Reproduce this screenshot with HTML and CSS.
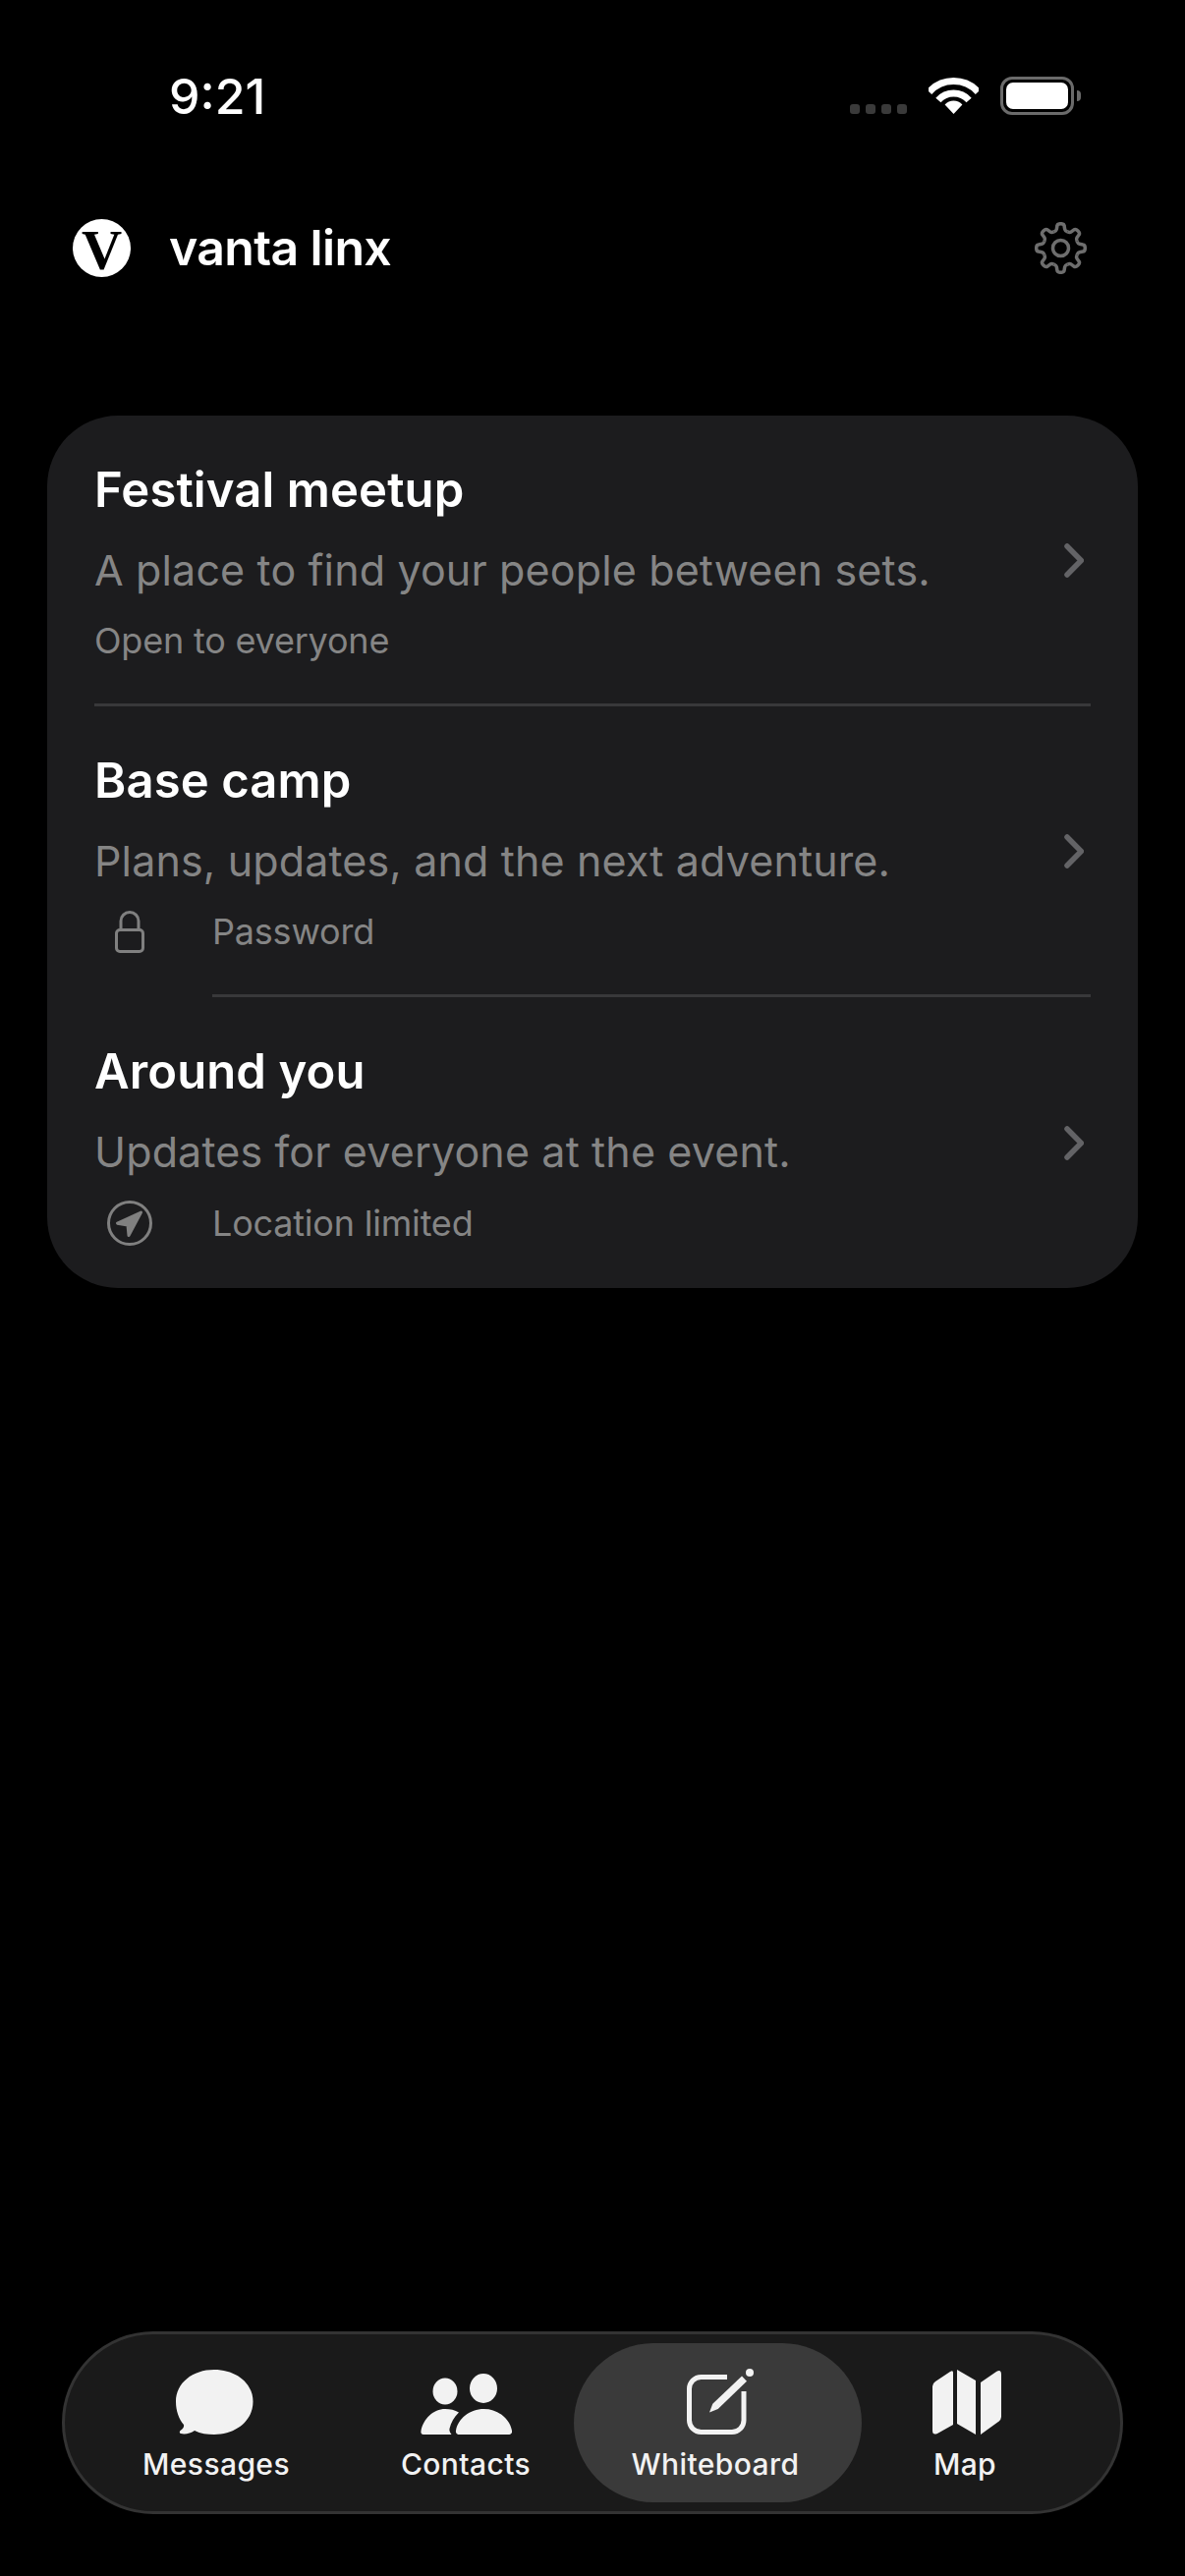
FILE: index.html
```html
<!DOCTYPE html>
<html lang="en">
<head>
    <meta charset="UTF-8">
    <meta name="viewport" content="width=device-width, initial-scale=1.0">
    <title>vanta linx</title>
    <link rel="stylesheet" href="styles.css">
</head>
<body>
    <div class="status-bar">
        <span class="time">9:21</span>
        <div class="status-icons">
            <div class="signal"><i></i><i></i><i></i><i></i></div>
            <svg class="wifi" width="51" height="37" viewBox="0 0 51 37">
                <path class="wifi-arc" d="M.6 14.6A33.5 33.5 0 0 1 50.4 14.6"/>
                <path class="wifi-arc" d="M9.9 23A21 21 0 0 1 41.1 23"/>
                <path class="wifi-dot" d="M25.5 37L16.6 27.5A12 12 0 0 1 34.4 27.5Z"/>
            </svg>
            <div class="battery"><div class="battery-level"></div></div>
        </div>
    </div>

    <header class="app-header">
        <div class="brand">
            <span class="logo">V</span>
            <h1>vanta linx</h1>
        </div>
        <svg class="gear" width="53" height="53" viewBox="-26.5 -26.5 53 53">
            <defs>
                <path id="tooth" d="M-6.9-16.6C-5.5-17.2-4.4-17.8-4.2-19L-3.6-22.6C-3.4-24.4-1.5-24.8 0-24.8S3.4-24.4 3.6-22.6L4.2-19C4.4-17.8 5.5-17.2 6.9-16.6"/>
            </defs>
            <use href="#tooth"/>
            <use href="#tooth" transform="rotate(45)"/>
            <use href="#tooth" transform="rotate(90)"/>
            <use href="#tooth" transform="rotate(135)"/>
            <use href="#tooth" transform="rotate(180)"/>
            <use href="#tooth" transform="rotate(225)"/>
            <use href="#tooth" transform="rotate(270)"/>
            <use href="#tooth" transform="rotate(315)"/>
            <circle r="8"/>
        </svg>
    </header>

    <main class="card">
        <div class="row">
            <div class="row-text">
                <h2>Festival meetup</h2>
                <p class="desc">A place to find your people between sets.</p>
                <p class="meta">Open to everyone</p>
            </div>
            <svg class="chevron" width="20" height="35" viewBox="0 0 20 35"><path d="M3 3L17.3 17.5L3 32"/></svg>
        </div>
        <div class="divider"></div>
        <div class="row">
            <div class="row-text">
                <h2>Base camp</h2>
                <p class="desc">Plans, updates, and the next adventure.</p>
                <div class="meta meta-icon">
                    <span class="meta-glyph">
                        <svg width="30" height="43" viewBox="0 0 30 43">
                            <rect x="1.5" y="19.5" width="27" height="22" rx="3.5"/>
                            <path d="M6 19V10.5A9 9 0 0 1 24 10.5V19"/>
                        </svg>
                    </span>
                    <span>Password</span>
                </div>
            </div>
            <svg class="chevron" width="20" height="35" viewBox="0 0 20 35"><path d="M3 3L17.3 17.5L3 32"/></svg>
        </div>
        <div class="divider divider-inset"></div>
        <div class="row">
            <div class="row-text">
                <h2>Around you</h2>
                <p class="desc">Updates for everyone at the event.</p>
                <div class="meta meta-icon">
                    <span class="meta-glyph">
                        <svg width="46" height="46" viewBox="0 0 46 46">
                            <circle cx="23" cy="23" r="21.5"/>
                            <path class="nav-arrow" d="M34.5 12L10.5 23.2L21 25L22 35.5Z"/>
                        </svg>
                    </span>
                    <span>Location limited</span>
                </div>
            </div>
            <svg class="chevron" width="20" height="35" viewBox="0 0 20 35"><path d="M3 3L17.3 17.5L3 32"/></svg>
        </div>
    </main>

    <nav class="tab-bar">
        <a class="tab">
            <span class="tab-icon icon-messages">
                <svg width="79" height="66" viewBox="0 0 79 66">
                    <path d="M39 0C61 0 78.5 13.5 78.5 32.5C78.5 52 61 66 39 66C32 66 25 65 19 62C15 65 9 66 5 65C3.5 64.5 3.5 63 4.5 62C7.5 60 8.5 58 8 56C3 50 0 42 0 32.5C0 13.5 17 0 39 0Z"/>
                </svg>
            </span>
            <span class="tab-label">Messages</span>
        </a>
        <a class="tab">
            <span class="tab-icon">
                <svg width="93" height="62" viewBox="0 0 93 62">
                    <ellipse cx="64" cy="15" rx="14" ry="15"/>
                    <path d="M36 58C38 46 50 36 64.5 36C79 36 91 46 93 58C93.5 60.5 92 62 89 62H40C37 62 35.5 60.5 36 58Z"/>
                    <ellipse cx="25" cy="18" rx="12.5" ry="13.5"/>
                    <path d="M3 62C1 62 0 60.5 .5 58C3 46 13 36 25 36C30 36 35 37 39 39.5C34 44 31 50 29.5 56C29 58 30 60 31.5 62Z"/>
                </svg>
            </span>
            <span class="tab-label">Contacts</span>
        </a>
        <a class="tab active">
            <span class="tab-icon icon-note">
                <svg width="68" height="67" viewBox="0 0 68 67">
                    <path class="note" d="M41 8.5H14.5A12 12 0 0 0 2.5 20.5V52.5A12 12 0 0 0 14.5 64.5H46A12 12 0 0 0 58 52.5V23"/>
                    <path d="M23 44.5L26.3 35.7L56 7.5L61 12.7L31.7 41Z"/>
                    <circle cx="64" cy="4" r="4"/>
                </svg>
            </span>
            <span class="tab-label">Whiteboard</span>
        </a>
        <a class="tab">
            <span class="tab-icon icon-map">
                <svg width="70" height="66" viewBox="0 0 70 66">
                    <path d="M0 17Q0 14 3 12L18 2Q21 0 21 3V56L5 65Q0 67 0 62Z"/>
                    <path d="M25 0L44 11V66L25 55Z"/>
                    <path d="M49 13L65 2Q70-1 70 5V48Q70 51 67 53L49 66Z"/>
                </svg>
            </span>
            <span class="tab-label">Map</span>
        </a>
    </nav>
</body>
</html>
```

FILE: styles.css
```css
*{
    margin: 0;
    padding: 0;
    box-sizing: border-box;
}

body{
    height: 100vh;
    display: flex;
    flex-direction: column;
    background-color: #000;
    color: #fff;
    font-family: "Inter", "Liberation Sans", sans-serif;
    overflow: hidden;
}

svg{
    display: block;
}

/* status bar */
.status-bar{
    display: flex;
    justify-content: space-between;
    padding: 68px 106px 0 172px;
    height: 128px;
}
.time{
    font-size: 50px;
    line-height: 60px;
    font-weight: 500;
}
.status-icons{
    display: flex;
    align-items: flex-end;
    height: 49px;
}
.signal{
    display: flex;
    gap: 6px;
    margin-bottom: 1px;
    margin-right: 22px;
}
.signal i{
    width: 10px;
    height: 10px;
    border-radius: 3px;
    background-color: #3a3a3a;
}
.wifi{
    margin-right: 22px;
    margin-bottom: 1px;
}
.wifi-arc{
    fill: none;
    stroke: #fff;
    stroke-width: 7;
}
.wifi-dot{
    fill: #fff;
}
.battery{
    position: relative;
    width: 75px;
    height: 39px;
    padding: 3px;
    border: 3px solid #6b6b6b;
    border-radius: 12px;
    margin-right: 7px;
}
.battery::after{
    content: "";
    position: absolute;
    left: 75px;
    top: 11px;
    width: 4px;
    height: 11px;
    border-radius: 0 4px 4px 0;
    background-color: #6b6b6b;
}
.battery-level{
    height: 100%;
    border-radius: 7px;
    background-color: #fff;
}

/* header */
.app-header{
    display: flex;
    justify-content: space-between;
    align-items: center;
    margin-top: 95px;
    padding: 0 100px 0 74px;
}
.brand{
    display: flex;
    align-items: center;
    gap: 39px;
}
.logo{
    width: 59px;
    height: 59px;
    border-radius: 50%;
    background-color: #fff;
    color: #000;
    font-family: "Liberation Serif", serif;
    font-weight: 700;
    font-size: 57px;
    line-height: 63px;
    text-align: center;
}
h1{
    font-size: 50px;
    line-height: 59px;
    font-weight: 600;
    letter-spacing: -0.65px;
}
.gear{
    fill: none;
    stroke: #6e6e6e;
    stroke-width: 3.5;
}

/* card */
.card{
    margin: 141px 48px 0;
    padding-bottom: 1px;
    border-radius: 72px;
    background-color: #1c1c1e;
}
.row{
    display: flex;
    align-items: center;
    padding: 47px 55px 42px 48px;
}
.row-text{
    flex: 1;
    display: flex;
    flex-direction: column;
    gap: 22px;
}
h2{
    font-size: 49px;
    line-height: 58px;
    font-weight: 600;
    letter-spacing: 0.1px;
}
.desc{
    margin: 1px 0 -1px;
    font-size: 43px;
    line-height: 58px;
    letter-spacing: 0.15px;
    color: #858585;
}
.meta{
    font-size: 36px;
    line-height: 44px;
    letter-spacing: -0.2px;
    color: #858585;
}
.meta-icon{
    display: flex;
    align-items: center;
    gap: 48px;
}
.meta-glyph{
    width: 72px;
    display: flex;
    justify-content: center;
}
.meta-glyph svg{
    fill: none;
    stroke: #808080;
    stroke-width: 3;
}
.meta-glyph .nav-arrow{
    fill: #808080;
    stroke-linejoin: round;
}
.chevron{
    margin-top: -3px;
    fill: none;
    stroke: #636366;
    stroke-width: 5.5;
    stroke-linecap: round;
    stroke-linejoin: round;
}
.divider{
    height: 3px;
    margin: 0 48px;
    background-color: #38383a;
}
.divider-inset{
    margin-left: 168px;
}

/* tab bar */
.tab-bar{
    display: grid;
    grid-template-columns: repeat(4, 254px);
    margin: auto 63px 63px;
    height: 186px;
    padding: 9px 31px 9px 27px;
    border: 3px solid #333;
    border-radius: 93px;
    background-color: #1a1a1a;
}
.tab{
    display: flex;
    flex-direction: column;
    align-items: center;
    padding-top: 20px;
    border-radius: 81px;
}
.tab.active{
    margin: 0 -22px 0 -17px;
    padding-right: 5px;
    background-color: #3a3a3a;
}
.tab-icon{
    height: 73px;
    display: flex;
    align-items: flex-end;
}
.tab-icon svg{
    fill: #f2f2f2;
}
.tab-icon .note{
    fill: none;
    stroke: #f2f2f2;
    stroke-width: 5;
}
.icon-messages{
    margin-right: 3px;
}
.icon-note{
    margin-left: 10px;
}
.icon-map{
    margin-left: 3px;
}
.tab-label{
    margin-top: 12px;
    font-size: 30px;
    line-height: 36px;
    font-weight: 500;
    letter-spacing: 0.4px;
    color: #f2f2f2;
}
```
